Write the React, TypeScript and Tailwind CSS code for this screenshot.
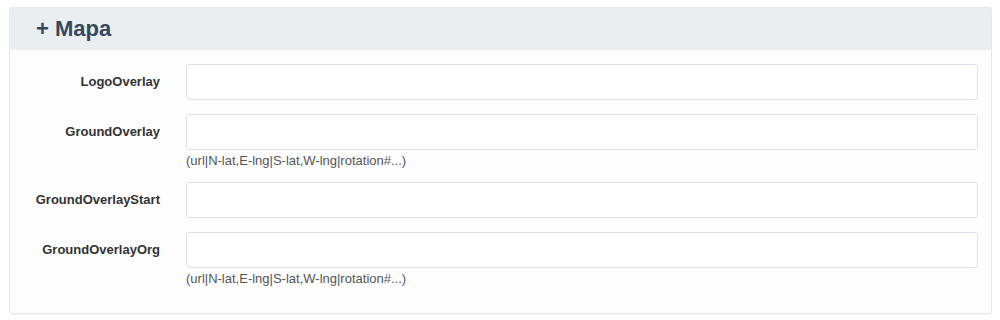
import React from 'react'

interface FieldProps {
  label: string;
  hint?: string;
}

const HINT = '(url|N-lat,E-lng|S-lat,W-lng|rotation#...)'

function Field({ label, hint }: FieldProps) {
  return (
    <div className="mb-[14px]">
      <div className="flex items-center">
        <label className="w-[150px] text-right text-[13px] font-bold text-[#333]">{label}</label>
        <input
          type="text"
          className="ml-[26px] h-[36px] w-[792px] rounded-[3px] border border-[#dde3ec] bg-white px-3 text-[13px] outline-none"
        />
      </div>
      {hint && (
        <div className="ml-[176px] mt-[3px] mb-[-1px] text-[13px] leading-[16px] text-[#555]">{hint}</div>
      )}
    </div>
  )
}

export default function App() {
  return (
    <div className="min-h-[320px] bg-white pt-[7px] pl-[9px] font-['Liberation_Sans',Arial,sans-serif]">
      <div className="w-[983px] rounded-[3px] border border-[#e6e9eb] bg-[#fdfdfd] shadow-[0_1px_1px_rgba(0,0,0,0.03)]">
        <div className="flex h-[42px] items-center bg-[#ebeef0] pl-[26px]">
          <h2 className="mt-[-1px] text-[22px] font-bold text-[#34495e]">+ Mapa</h2>
        </div>
        <div className="pt-[14px] pb-[13px]">
          <Field label="LogoOverlay" />
          <Field label="GroundOverlay" hint={HINT} />
          <Field label="GroundOverlayStart" />
          <Field label="GroundOverlayOrg" hint={HINT} />
        </div>
      </div>
    </div>
  )
}
